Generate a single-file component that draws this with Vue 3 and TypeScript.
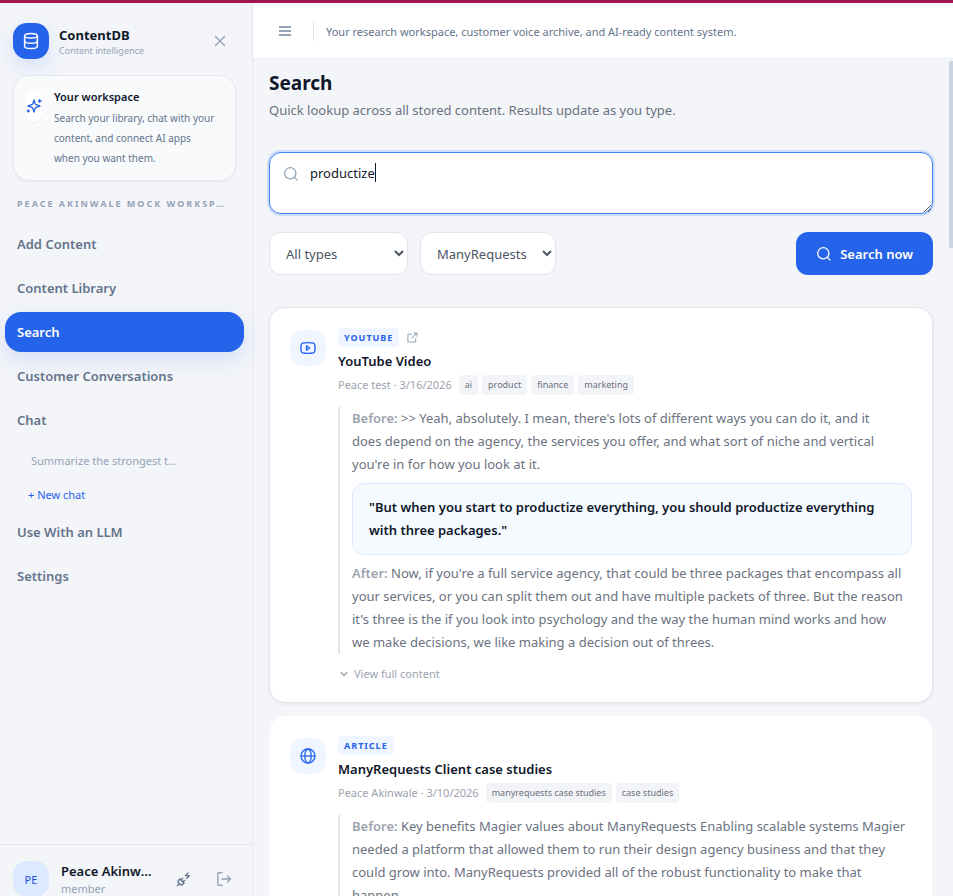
<script setup lang="ts">
import { ref } from 'vue'

interface NavItem {
  label: string
  active?: boolean
}

interface Result {
  kind: 'youtube' | 'article'
  badge: string
  title: string
  meta: string
  tags: string[]
  before: string
  match?: string
  after?: string
  external?: boolean
}

const query = ref('productize')
const type = ref('All types')
const workspace = ref('ManyRequests')

const primaryNav: NavItem[] = [
  { label: 'Add Content' },
  { label: 'Content Library' },
  { label: 'Search', active: true },
  { label: 'Customer Conversations' },
  { label: 'Chat' },
]
const secondaryNav: NavItem[] = [{ label: 'Use With an LLM' }, { label: 'Settings' }]

const results: Result[] = [
  {
    kind: 'youtube',
    badge: 'YOUTUBE',
    title: 'YouTube Video',
    meta: 'Peace test · 3/16/2026',
    tags: ['ai', 'product', 'finance', 'marketing'],
    before: `>> Yeah, absolutely. I mean, there's lots of different ways you can do it, and it
does depend on the agency, the services you offer, and what sort of niche and vertical
you're in for how you look at it.`,
    match:
      '"But when you start to productize everything, you should productize everything with three packages."',
    after: `Now, if you're a full service agency, that could be three packages that encompass all
your services, or you can split them out and have multiple packets of three. But the reason
it's three is the if you look into psychology and the way the human mind works and how
we make decisions, we like making a decision out of threes.`,
    external: true,
  },
  {
    kind: 'article',
    badge: 'ARTICLE',
    title: 'ManyRequests Client case studies',
    meta: 'Peace Akinwale · 3/10/2026',
    tags: ['manyrequests case studies', 'case studies'],
    before: `Key benefits Magier values about ManyRequests Enabling scalable systems Magier
needed a platform that allowed them to run their design agency business and that they
could grow into. ManyRequests provided all of the robust functionality to make that
happen.`,
  },
]
</script>

<template>
  <div class="page">
    <div class="shell">
      <aside class="sidebar">
        <div class="brand">
          <span class="logo">
            <svg viewBox="0 0 24 24" width="18" height="18" fill="none" stroke="currentColor" stroke-width="2" stroke-linecap="round" stroke-linejoin="round" aria-hidden="true">
              <ellipse cx="12" cy="5" rx="8.500" ry="3" />
              <path d="M3.500 5v14c0 1.700 3.800 3 8.500 3s8.500-1.300 8.500-3V5" />
              <path d="M3.500 12c0 1.700 3.800 3 8.500 3s8.500-1.300 8.500-3" />
            </svg>
          </span>
          <div class="brand-text">
            <strong>ContentDB</strong>
            <span>Content intelligence</span>
          </div>
          <button class="icon-button" type="button" aria-label="Close sidebar">
            <svg viewBox="0 0 16 16" width="16" height="16" fill="none" stroke="currentColor" stroke-width="1.400" stroke-linecap="round" aria-hidden="true">
              <path d="M3.500 3.500l9 9M12.500 3.500l-9 9" />
            </svg>
          </button>
        </div>

        <section class="intro">
          <span class="spark">
            <svg viewBox="0 0 24 24" width="16" height="16" fill="none" stroke="currentColor" stroke-width="2" stroke-linecap="round" stroke-linejoin="round" aria-hidden="true">
              <path d="M12 3l-1.900 5.800a2 2 0 0 1-1.300 1.300L3 12l5.800 1.900a2 2 0 0 1 1.300 1.300L12 21l1.900-5.800a2 2 0 0 1 1.300-1.300L21 12l-5.800-1.900a2 2 0 0 1-1.300-1.300Z" />
              <path d="M20.500 2.500v4M22.500 4.500h-4M3.500 18v3M5 19.500H2" />
            </svg>
          </span>
          <div>
            <h2>Your workspace</h2>
            <p>Search your library, chat with your content, and connect AI apps when you want them.</p>
          </div>
        </section>

        <p class="workspace-name">PEACE AKINWALE MOCK WORKSPACE</p>

        <nav class="nav">
          <a v-for="item in primaryNav" :key="item.label" href="#" class="nav-link" :class="{ active: item.active }">{{ item.label }}</a>
          <div class="chats">
            <a href="#" class="recent">Summarize the strongest t...</a>
            <button type="button" class="new-chat">+ New chat</button>
          </div>
          <a v-for="item in secondaryNav" :key="item.label" href="#" class="nav-link">{{ item.label }}</a>
        </nav>

        <footer class="account">
          <span class="avatar">PE</span>
          <div class="who">
            <strong>Peace Akinwale</strong>
            <span>member</span>
          </div>
          <button class="icon-button plug" type="button" aria-label="Connections">
            <svg viewBox="0 0 24 24" width="16" height="16" fill="none" stroke="currentColor" stroke-width="2" stroke-linecap="round" stroke-linejoin="round" aria-hidden="true">
              <path d="M6.300 20.300a2.400 2.400 0 0 0 3.400 0L12 18l-6-6-2.300 2.300a2.400 2.400 0 0 0 0 3.400Z" />
              <path d="M2 22l3-3M7.500 13.500L10 11M10.500 16.500L13 14M18 3l-4 4h6l-4 4" />
            </svg>
          </button>
          <button class="icon-button" type="button" aria-label="Sign out">
            <svg viewBox="0 0 16 16" width="16" height="16" fill="none" stroke="currentColor" stroke-width="1.400" stroke-linecap="round" stroke-linejoin="round" aria-hidden="true">
              <path d="M6 1.800H2.800a1 1 0 0 0-1 1v10.400a1 1 0 0 0 1 1H6M6 8h8.500M11.500 5l3 3-3 3" />
            </svg>
          </button>
        </footer>
      </aside>

      <div class="content">
        <header class="topbar">
          <button class="icon-button" type="button" aria-label="Toggle sidebar">
            <svg viewBox="0 0 16 16" width="16" height="16" fill="none" stroke="currentColor" stroke-width="1.800" aria-hidden="true">
              <path d="M2 4h12M2 8h12M2 12h12" />
            </svg>
          </button>
          <span class="divider"></span>
          <p>Your research workspace, customer voice archive, and AI-ready content system.</p>
        </header>

        <main class="main">
          <h1>Search</h1>
          <p class="lead">Quick lookup across all stored content. Results update as you type.</p>

          <form class="search" @submit.prevent>
            <div class="query">
              <svg viewBox="0 0 16 16" width="16" height="16" fill="none" stroke="currentColor" stroke-width="1.300" stroke-linecap="round" aria-hidden="true">
                <circle cx="7.300" cy="7.300" r="5.600" />
                <path d="M11.400 11.400l2.700 2.700" />
              </svg>
              <textarea v-model="query" rows="2" aria-label="Search stored content"></textarea>
              <span class="caret"></span>
            </div>
            <div class="filters">
              <select v-model="type" class="type" aria-label="Content type">
                <option>All types</option>
                <option>Article</option>
                <option>YouTube</option>
              </select>
              <select v-model="workspace" class="space" aria-label="Workspace">
                <option>ManyRequests</option>
              </select>
              <button type="submit" class="submit">
                <svg viewBox="0 0 16 16" width="16" height="16" fill="none" stroke="currentColor" stroke-width="1.300" stroke-linecap="round" aria-hidden="true">
                  <circle cx="7.300" cy="7.300" r="5.600" />
                  <path d="M11.400 11.400l2.700 2.700" />
                </svg>
                Search now
              </button>
            </div>
          </form>

          <div class="results">
            <article v-for="item in results" :key="item.title" class="result" :class="item.kind">
              <span class="kind">
                <svg v-if="item.kind === 'youtube'" viewBox="0 0 16 16" width="16" height="16" fill="none" stroke="currentColor" stroke-width="1.400" stroke-linejoin="round" aria-hidden="true">
                  <path d="M1 8c0-2 .2-3.200.4-3.900.2-.6.600-.9 1.100-1C4.300 2.700 6.500 2.600 8 2.600s3.700.1 5.500.5c.5.1.9.4 1.100 1 .2.700.4 1.900.4 3.900s-.2 3.200-.4 3.900c-.2.6-.6.900-1.100 1-1.800.4-4 .5-5.500.5s-3.700-.1-5.500-.5c-.5-.1-.9-.4-1.100-1C1.200 11.200 1 10 1 8Z" />
                  <path d="M6.500 5.900L9.700 8l-3.200 2.100Z" />
                </svg>
                <svg v-else viewBox="0 0 16 16" width="16" height="16" fill="none" stroke="currentColor" stroke-width="1.300" aria-hidden="true">
                  <circle cx="8" cy="8" r="7" />
                  <ellipse cx="8" cy="8" rx="3.200" ry="7" />
                  <path d="M1 8h14" />
                </svg>
              </span>
              <div class="body">
                <div class="badge-row">
                  <span class="badge">{{ item.badge }}</span>
                  <a v-if="item.external" href="#" aria-label="Open source">
                    <svg viewBox="0 0 12 12" width="11" height="11" fill="none" stroke="currentColor" stroke-width="1.100" stroke-linecap="round" stroke-linejoin="round" aria-hidden="true">
                      <path d="M5 2.500H1.500a.5.500 0 0 0-.5.500v7.500a.5.500 0 0 0 .5.500H9a.5.500 0 0 0 .5-.5V7M7.500 1H11v3.500M11 1L5.500 6.500" />
                    </svg>
                  </a>
                </div>
                <h3>{{ item.title }}</h3>
                <div class="meta">
                  <span class="byline">{{ item.meta }}</span>
                  <span v-for="tag in item.tags" :key="tag" class="tag">{{ tag }}</span>
                </div>
                <div class="excerpt">
                  <p><strong>Before:</strong> {{ item.before }}</p>
                  <blockquote v-if="item.match">{{ item.match }}</blockquote>
                  <p v-if="item.after"><strong>After:</strong> {{ item.after }}</p>
                </div>
                <button type="button" class="expand">
                  <svg viewBox="0 0 12 12" width="12" height="12" fill="none" stroke="currentColor" stroke-width="1.200" stroke-linecap="round" stroke-linejoin="round" aria-hidden="true">
                    <path d="M3 4.500l3 3 3-3" />
                  </svg>
                  View full content
                </button>
              </div>
            </article>
          </div>
        </main>
        <span class="scroll-thumb"></span>
      </div>
    </div>
  </div>
</template>

<style>
body {
  margin: 0;
  background: #f3f5f9;
}
</style>

<style scoped>
* {
  box-sizing: border-box;
}

.page {
  height: 100vh;
  overflow: hidden;
  border-top: 3px solid #a3154f;
  background: #f3f5f9;
  color: #0f172a;
  font-family: "Noto Sans", "Open Sans", sans-serif;
  font-size: 13px;
}

.shell {
  display: flex;
  height: calc(100vh + 14px);
}

h1,
h2,
h3,
p,
blockquote {
  margin: 0;
}

a {
  color: inherit;
  text-decoration: none;
}

button,
select,
textarea {
  font: inherit;
}

button {
  border: 0;
  padding: 0;
  background: none;
  cursor: pointer;
}

svg {
  display: block;
  flex: none;
}

.sidebar {
  display: flex;
  flex: none;
  flex-direction: column;
  width: 253px;
  border-right: 1px solid #e5e8ef;
}

.brand {
  display: flex;
  align-items: center;
  gap: 10px;
  padding: 20px 16px 16px 13px;
}

.logo {
  display: grid;
  place-items: center;
  width: 36px;
  height: 36px;
  border-radius: 14px;
  background: #2563eb;
  box-shadow: 0 8px 20px rgba(37, 99, 235, 0.14);
  color: #fff;
}

.brand-text {
  display: flex;
  flex: 1;
  flex-direction: column;
  padding-top: 2px;
}

.brand-text strong {
  font-size: 13px;
  line-height: 18px;
}

.brand-text span {
  color: #94a3b8;
  font-size: 9px;
  line-height: 14px;
}

.icon-button {
  display: grid;
  place-items: center;
  width: 32px;
  height: 32px;
  color: #94a3b8;
}

.icon-button.plug {
  color: #64748b;
}

.intro {
  display: flex;
  gap: 12px;
  margin: 0 16px 0 13px;
  padding: 11px 16px 12px 12px;
  border: 1px solid #e4e8f0;
  border-radius: 16px;
  background: #f8fafc;
  box-shadow: 0 1px 2px rgba(15, 23, 42, 0.05);
}

.spark {
  display: grid;
  flex: none;
  place-items: center;
  width: 16px;
  height: 32px;
  margin-top: 3px;
  border-radius: 8px;
  background: #fff;
  box-shadow: 0 1px 2px rgba(15, 23, 42, 0.05);
  color: #2563eb;
}

.intro h2 {
  font-size: 11px;
  font-weight: 600;
  line-height: 20px;
}

.intro p {
  margin-top: 1px;
  color: #64748b;
  font-size: 10px;
  line-height: 20px;
}

.workspace-name {
  overflow: hidden;
  margin: 15px 23px 12px 17px;
  color: #94a3b8;
  font-size: 9px;
  font-weight: 700;
  letter-spacing: 2px;
  line-height: 16px;
  text-overflow: ellipsis;
  white-space: nowrap;
}

.nav {
  display: flex;
  flex: 1;
  flex-direction: column;
  gap: 4px;
  padding: 0 8px 0 5px;
}

.nav-link {
  padding: 0 12px;
  border-radius: 16px;
  color: #64748b;
  font-weight: 600;
  line-height: 40px;
}

.nav-link.active {
  background: #2563eb;
  box-shadow: 0 8px 20px rgba(37, 99, 235, 0.14);
  color: #fff;
}

.chats {
  display: flex;
  flex-direction: column;
  align-items: flex-start;
  margin-bottom: -4px;
  padding: 0 23px;
  font-size: 11px;
  line-height: 34px;
}

.recent {
  padding-left: 3px;
  color: #94a3b8;
}

.new-chat {
  color: #2563eb;
}

.account {
  display: flex;
  align-items: center;
  gap: 8px;
  padding: 16px 12px 16px 13px;
  border-top: 1px solid #e5e8ef;
}

.avatar {
  display: grid;
  flex: none;
  place-items: center;
  width: 36px;
  height: 36px;
  border-radius: 14px;
  background: #dbeafe;
  color: #1d4ed8;
  font-size: 11px;
}

.who {
  display: flex;
  flex: 1;
  flex-direction: column;
  min-width: 0;
  padding: 0 4px;
}

.who strong {
  overflow: hidden;
  font-weight: 600;
  line-height: 20px;
  text-overflow: ellipsis;
  white-space: nowrap;
}

.who span {
  color: #94a3b8;
  font-size: 11px;
  line-height: 16px;
}

.content {
  position: relative;
  display: flex;
  flex: 1;
  flex-direction: column;
  min-width: 0;
}

.topbar {
  display: flex;
  flex: none;
  align-items: center;
  gap: 12px;
  height: 56px;
  padding: 0 16px;
  border-bottom: 1px solid #e9ecf2;
  background: #fff;
}

.topbar p {
  padding-top: 2px;
  color: #64748b;
  font-size: 11px;
}

.divider {
  width: 1px;
  height: 20px;
  background: #e2e8f0;
}

.main {
  flex: 1;
  min-height: 0;
  overflow: hidden;
  padding: 12px 20px 0 16px;
}

h1 {
  font-size: 19px;
  line-height: 24px;
}

.lead {
  margin-top: 4px;
  color: #6b7280;
  line-height: 22px;
}

.search {
  margin-top: 31px;
}

.query {
  position: relative;
  color: #94a3b8;
}

.query svg {
  position: absolute;
  z-index: 1;
  top: 14px;
  left: 14px;
}

.query textarea {
  display: block;
  width: 100%;
  height: 62px;
  padding: 10px 16px 10px 40px;
  border: 1px solid #3b82f6;
  border-radius: 12px;
  outline: none;
  background: #fff;
  box-shadow: 0 0 0 2px #cddcf8;
  color: #0f172a;
  line-height: 20px;
  resize: vertical;
}

.caret {
  position: absolute;
  top: 11px;
  left: 106px;
  width: 1px;
  height: 19px;
  background: #0f172a;
}

.filters {
  display: flex;
  gap: 12px;
  margin-top: 18px;
}

.filters select {
  height: 43px;
  padding: 0 0 0 12px;
  border: 1px solid #e2e5ee;
  border-radius: 12px;
  background: #fff;
  color: #4b5563;
}

.filters .type {
  width: 139px;
}

.filters .space {
  width: 136px;
}

.submit {
  display: flex;
  align-items: center;
  gap: 8px;
  margin-left: auto;
  padding: 0 20px;
  border-radius: 12px;
  background: #2563eb;
  color: #fff;
  font-weight: 600;
}

.results {
  display: flex;
  flex-direction: column;
  gap: 12px;
  margin-top: 32px;
}

.result {
  display: flex;
  gap: 12px;
  padding: 20px;
  border: 1px solid #f6f7fa;
  border-radius: 16px;
  background: #fff;
}

.result.youtube {
  border-color: #e4e6ee;
  box-shadow: 0 1px 3px rgba(15, 23, 42, 0.08);
}

.kind {
  display: grid;
  flex: none;
  place-items: center;
  width: 36px;
  height: 36px;
  margin-top: 2px;
  border-radius: 12px;
  background: #eff6ff;
  color: #2563eb;
}

.body {
  flex: 1;
  min-width: 0;
}

.badge-row {
  display: flex;
  align-items: center;
  gap: 8px;
  color: #94a3b8;
}

.badge {
  padding: 0 6px;
  border-radius: 4px;
  background: #eff6ff;
  color: #2563eb;
  font-size: 9px;
  font-weight: 700;
  letter-spacing: 1px;
  line-height: 19px;
}

h3 {
  margin-top: 4px;
  font-size: 13px;
  font-weight: 600;
  line-height: 20px;
}

.meta {
  display: flex;
  align-items: center;
  gap: 4px;
  margin-top: 4px;
  color: #9ca3af;
  line-height: 20px;
}

.byline {
  margin-right: 3px;
  font-size: 11px;
}

.tag {
  padding: 0 6px;
  border-radius: 4px;
  background: #f3f4f8;
  color: #6b7280;
  font-size: 9px;
}

.excerpt {
  margin-top: 12px;
  padding-left: 12px;
  border-left: 2px solid #e2e4ec;
  color: #6b7280;
  line-height: 23px;
}

.excerpt p {
  white-space: pre-line;
}

.excerpt strong {
  color: #9ca3af;
  font-weight: 600;
}

blockquote {
  margin: 7px 0;
  padding: 12px 16px;
  border: 1px solid #dbeafe;
  border-radius: 12px;
  background: #f5faff;
  color: #0f172a;
  font-weight: 600;
}

.expand {
  display: flex;
  align-items: center;
  gap: 4px;
  margin-top: 12px;
  color: #9ca3af;
  font-size: 11px;
  line-height: 16px;
}

.scroll-thumb {
  position: absolute;
  top: 58px;
  right: 0;
  width: 4px;
  height: 187px;
  border-radius: 2px 0 0 2px;
  background: #cbd5e1;
}
</style>
